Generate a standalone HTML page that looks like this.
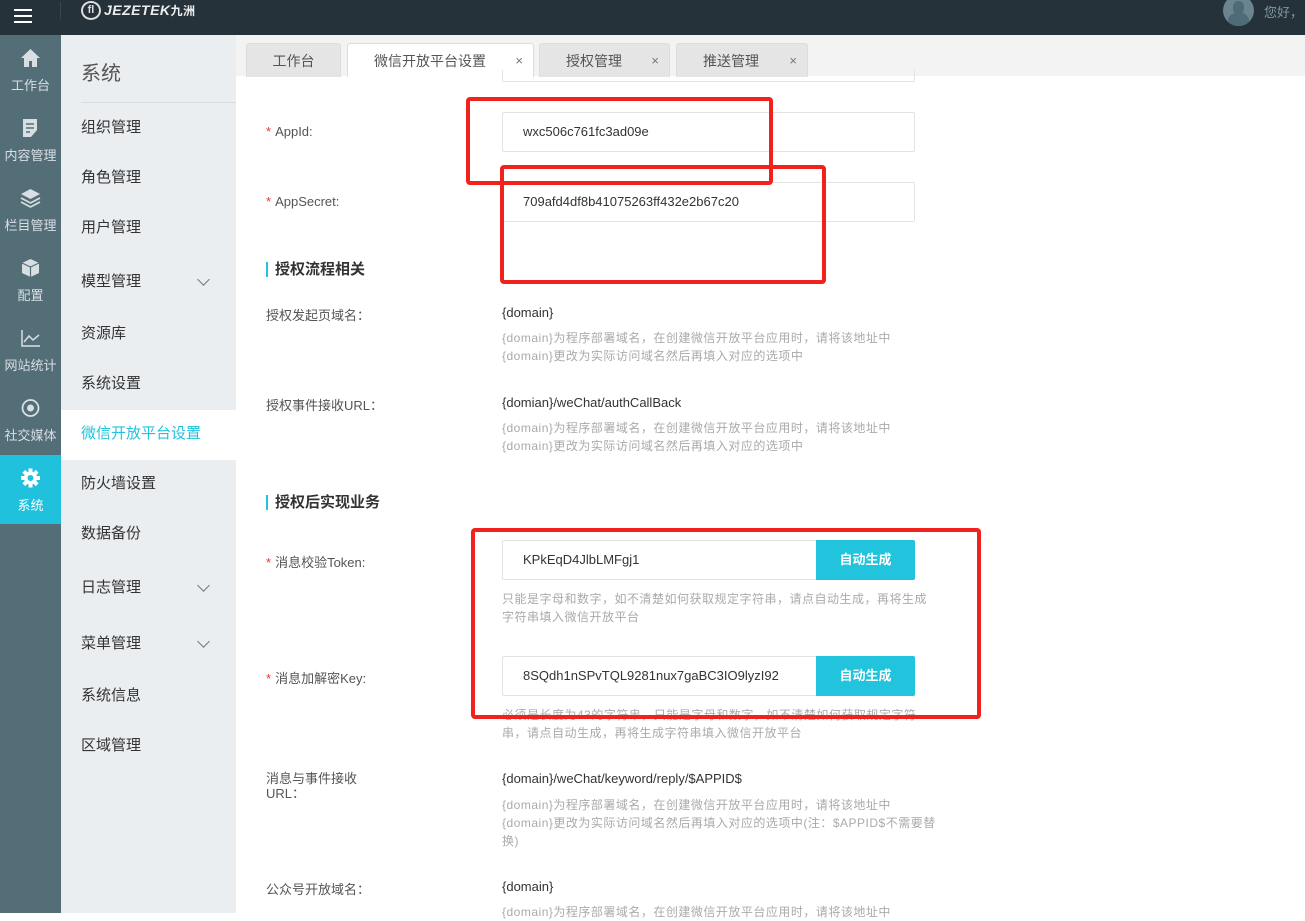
<!DOCTYPE html>
<html><head><meta charset="utf-8"><style>
*{margin:0;padding:0;box-sizing:border-box}
body{width:1305px;height:913px;overflow:hidden;position:relative;font-family:"Liberation Sans","Noto Sans CJK SC",sans-serif;background:#fff;color:#333}
.a{position:absolute}
#hd{left:0;top:0;width:1305px;height:35px;background:#263239}
#rail{left:0;top:35px;width:61px;height:878px;background:#546e78}
.ri{position:absolute;left:0;width:61px;height:70px;text-align:center;color:#d8dfe3;font-size:13px}
.ri .t{position:absolute;top:40px;left:-10px;width:81px;text-align:center;white-space:nowrap}
.ri svg{position:absolute;left:20px;top:13px}
#sub{left:61px;top:35px;width:175px;height:878px;background:#ebeef1}
.si{position:absolute;left:20px;font-size:15px;color:#333;line-height:20px}
.chev{position:absolute;left:138px;width:9px;height:9px;border-right:1.3px solid #777;border-bottom:1.3px solid #777;transform:rotate(45deg)}
#tabs{left:236px;top:35px;width:1069px;height:41px;background:#f3f3f3}
.tab{position:absolute;top:8px;height:34px;background:#e5e5e5;border:1px solid #ddd;border-bottom:none;border-radius:3px 3px 0 0;font-size:14px;color:#555;line-height:34px}
.tab .x{position:absolute;right:10px;top:0;font-size:13px;color:#777}
.lbl{position:absolute;left:266px;font-size:13px;color:#555}
.lbl b{color:#e33;font-weight:normal;margin-right:4px}
.inp{position:absolute;left:502px;width:413px;height:40px;border:1px solid #e3e3e3;border-radius:2px;font-size:13px;color:#333;padding-left:20px;line-height:38px;white-space:nowrap;overflow:hidden}
.btn{position:absolute;left:816px;width:99px;height:40px;background:#22c3dd;color:#fff;font-size:13px;text-align:center;line-height:40px;border-radius:0 2px 2px 0;font-weight:bold}
.sec{position:absolute;left:266px;font-size:15px;font-weight:bold;color:#333;border-left:2px solid #22c3dd;padding-left:7px;line-height:15px}
.val{position:absolute;left:502px;font-size:13px;color:#333}
.hint{position:absolute;left:502px;width:440px;font-size:12px;color:#aaa;line-height:18px;white-space:nowrap;letter-spacing:0.5px}
.red{position:absolute;border:4px solid #f1221b;border-radius:4px}
</style></head><body>
<div id="hd" class="a">
 <div class="a" style="left:14px;top:9px;width:18px;height:2px;background:#fff;box-shadow:0 6px 0 #fff,0 12px 0 #fff"></div>
 <div class="a" style="left:60px;top:2px;width:1px;height:17px;background:#3a454c"></div>
 <div class="a" style="left:81px;top:1px;width:20px;height:19px;border:2px solid #ddd;border-radius:50%;color:#ddd;font-size:11px;font-weight:bold;text-align:center;line-height:15px">fl</div>
 <div class="a" style="left:104px;top:2px;color:#eee;font-weight:bold;font-style:italic;font-size:14px;letter-spacing:0.5px">JEZETEK<span style="font-size:12px;font-style:normal">九洲</span></div>
 <div class="a" style="left:1223px;top:-5px;width:31px;height:31px;border-radius:50%;background:#6b8590;overflow:hidden"><div class="a" style="left:10px;top:6px;width:11px;height:13px;border-radius:5px;background:#4f6b77"></div><div class="a" style="left:5px;top:18px;width:21px;height:16px;border-radius:8px;background:#4f6b77"></div></div>
 <div class="a" style="left:1264px;top:2px;color:#7f98a4;font-size:13px">您好，</div>
</div>
<div id="rail" class="a">
 <div class="ri" style="top:0"><svg width="21" height="20" viewBox="0 0 21 20"><path d="M10.5 1 L1 10 H4 V19 H9 V13 H12 V19 H17 V10 H20Z" fill="#d8dfe3"/></svg><div class="t">工作台</div></div>
 <div class="ri" style="top:70px"><svg width="21" height="20" viewBox="0 0 21 20"><path d="M3 1 H17 V12 L11 19 H3Z" fill="#d8dfe3"/><path d="M6 6H14M6 10H14M6 14H10" stroke="#546e78" stroke-width="1.6"/></svg><div class="t">内容管理</div></div>
 <div class="ri" style="top:140px"><svg width="21" height="20" viewBox="0 0 21 20"><path d="M10.5 1 L20 6 L10.5 11 L1 6Z" fill="#d8dfe3"/><path d="M1 10 L10.5 15 L20 10M1 14 L10.5 19 L20 14" stroke="#d8dfe3" stroke-width="1.6" fill="none"/></svg><div class="t">栏目管理</div></div>
 <div class="ri" style="top:210px"><svg width="21" height="20" viewBox="0 0 21 20"><path d="M10.5 1 L19 5 V15 L10.5 19 L2 15 V5Z" fill="#d8dfe3"/><path d="M2 5 L10.5 9 L19 5M10.5 9 V19" stroke="#546e78" stroke-width="1.2" fill="none"/></svg><div class="t">配置</div></div>
 <div class="ri" style="top:280px"><svg width="21" height="20" viewBox="0 0 21 20"><path d="M2 2 V18 H20M4 14 L9 8 L13 12 L19 7" stroke="#d8dfe3" stroke-width="1.5" fill="none"/></svg><div class="t">网站统计</div></div>
 <div class="ri" style="top:350px"><svg width="21" height="20" viewBox="0 0 21 20"><circle cx="10.5" cy="10" r="8" stroke="#d8dfe3" stroke-width="1.8" fill="none"/><circle cx="10.5" cy="10" r="3.5" fill="#d8dfe3"/></svg><div class="t">社交媒体</div></div>
 <div class="ri" style="top:420px;background:#1fc1dd;height:69px;color:#fff"><svg width="21" height="20" viewBox="0 0 21 20"><g fill="#fff"><circle cx="10.5" cy="10" r="6.5"/><rect x="8.5" y="0.5" width="4" height="19"/><rect x="1" y="8" width="19" height="4"/><rect x="8.5" y="0.5" width="4" height="19" transform="rotate(45 10.5 10)"/><rect x="8.5" y="0.5" width="4" height="19" transform="rotate(-45 10.5 10)"/></g><circle cx="10.5" cy="10" r="3" fill="#1fc1dd"/></svg><div class="t">系统</div></div>
</div>
<div id="sub" class="a">
 <div class="a" style="left:20px;top:22px;font-size:20px;color:#555">系统</div>
 <div class="a" style="left:20px;top:67px;width:155px;height:1px;background:#d8dde1"></div>
 <div class="si" style="top:83px">组织管理</div>
 <div class="si" style="top:133px">角色管理</div>
 <div class="si" style="top:183px">用户管理</div>
 <div class="si" style="top:237px">模型管理</div><div class="chev" style="top:240px"></div>
 <div class="si" style="top:289px">资源库</div>
 <div class="si" style="top:339px">系统设置</div>
 <div class="a" style="left:0;top:375px;width:175px;height:50px;background:#fff"></div>
 <div class="si" style="top:389px;color:#22c3dd">微信开放平台设置</div>
 <div class="si" style="top:439px">防火墙设置</div>
 <div class="si" style="top:489px">数据备份</div>
 <div class="si" style="top:543px">日志管理</div><div class="chev" style="top:546px"></div>
 <div class="si" style="top:599px">菜单管理</div><div class="chev" style="top:602px"></div>
 <div class="si" style="top:651px">系统信息</div>
 <div class="si" style="top:701px">区域管理</div>
</div>
<div id="tabs" class="a">
 <div class="tab" style="left:10px;width:95px;text-align:center">工作台</div>
 <div class="tab" style="left:111px;width:187px;background:#fff;height:34px;padding-left:26px">微信开放平台设置<span class="x">×</span></div>
 <div class="tab" style="left:303px;width:131px;padding-left:26px">授权管理<span class="x">×</span></div>
 <div class="tab" style="left:440px;width:132px;padding-left:26px">推送管理<span class="x">×</span></div>
</div>
<div class="a" style="left:502px;top:70px;width:413px;height:12px;border:1px solid #e3e3e3;border-top:none;border-radius:0 0 2px 2px"></div>
<div class="lbl" style="top:124px"><b>*</b>AppId:</div>
<div class="inp" style="top:112px">wxc506c761fc3ad09e</div>
<div class="lbl" style="top:194px"><b>*</b>AppSecret:</div>
<div class="inp" style="top:182px">709afd4df8b41075263ff432e2b67c20</div>
<div class="sec" style="top:262px">授权流程相关</div>
<div class="lbl" style="top:305px">授权发起页域名：</div>
<div class="val" style="top:305px">{domain}</div>
<div class="hint" style="top:329px">{domain}为程序部署域名，在创建微信开放平台应用时，请将该地址中<br>{domain}更改为实际访问域名然后再填入对应的选项中</div>
<div class="lbl" style="top:395px">授权事件接收URL：</div>
<div class="val" style="top:395px">{domian}/weChat/authCallBack</div>
<div class="hint" style="top:419px">{domain}为程序部署域名，在创建微信开放平台应用时，请将该地址中<br>{domain}更改为实际访问域名然后再填入对应的选项中</div>
<div class="sec" style="top:495px">授权后实现业务</div>
<div class="lbl" style="top:552px"><b>*</b>消息校验Token:</div>
<div class="inp" style="top:540px">KPkEqD4JlbLMFgj1</div><div class="btn" style="top:540px">自动生成</div>
<div class="hint" style="top:590px">只能是字母和数字，如不清楚如何获取规定字符串，请点自动生成，再将生成<br>字符串填入微信开放平台</div>
<div class="lbl" style="top:668px"><b>*</b>消息加解密Key:</div>
<div class="inp" style="top:656px;padding-right:100px">8SQdh1nSPvTQL9281nux7gaBC3IO9lyzI92</div><div class="btn" style="top:656px">自动生成</div>
<div class="hint" style="top:706px">必须是长度为43的字符串，只能是字母和数字，如不清楚如何获取规定字符<br>串，请点自动生成，再将生成字符串填入微信开放平台</div>
<div class="lbl" style="top:771px;line-height:15px">消息与事件接收<br>URL：</div>
<div class="val" style="top:771px">{domain}/weChat/keyword/reply/$APPID$</div>
<div class="hint" style="top:796px">{domain}为程序部署域名，在创建微信开放平台应用时，请将该地址中<br>{domain}更改为实际访问域名然后再填入对应的选项中(注：$APPID$不需要替<br>换)</div>
<div class="lbl" style="top:879px">公众号开放域名：</div>
<div class="val" style="top:879px">{domain}</div>
<div class="hint" style="top:903px">{domain}为程序部署域名，在创建微信开放平台应用时，请将该地址中</div>
<div class="red" style="left:466px;top:97px;width:307px;height:88px"></div>
<div class="red" style="left:500px;top:165px;width:326px;height:119px"></div>
<div class="red" style="left:471px;top:528px;width:510px;height:191px"></div>
</body></html>
